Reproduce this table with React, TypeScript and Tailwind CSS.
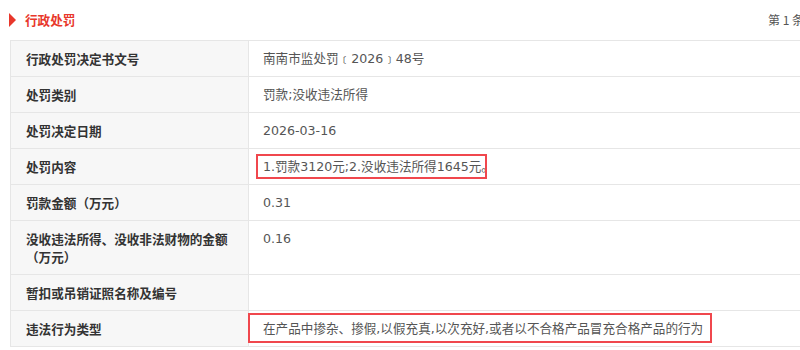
import React from 'react';

type Row = {
  label: string[];
  value: string;
  mark?: 'short' | 'long';
};

const rows: Row[] = [
  { label: ['行政处罚决定书文号'], value: '南南市监处罚﹝2026﹞48号' },
  { label: ['处罚类别'], value: '罚款;没收违法所得' },
  { label: ['处罚决定日期'], value: '2026-03-16' },
  { label: ['处罚内容'], value: '1.罚款3120元;2.没收违法所得1645元。', mark: 'short' },
  { label: ['罚款金额（万元）'], value: '0.31' },
  { label: ['没收违法所得、没收非法财物的金额', '（万元）'], value: '0.16' },
  { label: ['暂扣或吊销证照名称及编号'], value: '' },
  {
    label: ['违法行为类型'],
    value: '在产品中掺杂、掺假,以假充真,以次充好,或者以不合格产品冒充合格产品的行为',
    mark: 'long',
  },
];

export default function App() {
  return (
    <div className="w-[800px] h-[350px] overflow-hidden bg-white font-['Noto_Sans_CJK_SC',sans-serif]">
      {/* Section header */}
      <div className="h-[40px] flex items-center pl-[9px] relative">
        <span className="w-0 h-0 border-l-[7px] border-y-[7px] border-y-transparent border-l-[#e8372b]"></span>
        <span className="ml-[9px] text-[12.6px] font-bold text-[#e8372b] leading-none">行政处罚</span>
        <span className="ml-auto mr-[-4px] whitespace-nowrap text-[12px] text-[#555] leading-none">第 1 条</span>
      </div>

      {/* Detail table */}
      <div className="ml-[10px] w-[800px] border-t border-l border-[#e6e6e6]">
        {rows.map((row, i) => (
          <div key={i} className="flex border-b border-[#e6e6e6]">
            <div className="w-[238px] shrink-0 bg-[#f7f7f7] border-r border-[#e6e6e6] pl-[15px] pt-[9px] pb-[8px] text-[12.6px] leading-[18px] font-bold text-[#333]">
              {row.label.map((l, j) => (
                <div key={j}>{l}</div>
              ))}
            </div>
            <div className="relative flex-1 pl-[14px] pt-[9px] pb-[8px] text-[12.6px] leading-[18px] text-[#555] whitespace-nowrap font-['DejaVu_Sans','Noto_Sans_CJK_SC',sans-serif]">
              {row.value || '\u00a0'}
              {row.mark === 'short' && (
                <div className="absolute left-[7px] top-[5px] w-[231px] h-[25px] border-2 border-[#f0474d]"></div>
              )}
              {row.mark === 'long' && (
                <div className="absolute left-[-1px] top-[2px] w-[464px] h-[30px] border-2 border-[#f0474d]"></div>
              )}
            </div>
          </div>
        ))}
      </div>
    </div>
  );
}
